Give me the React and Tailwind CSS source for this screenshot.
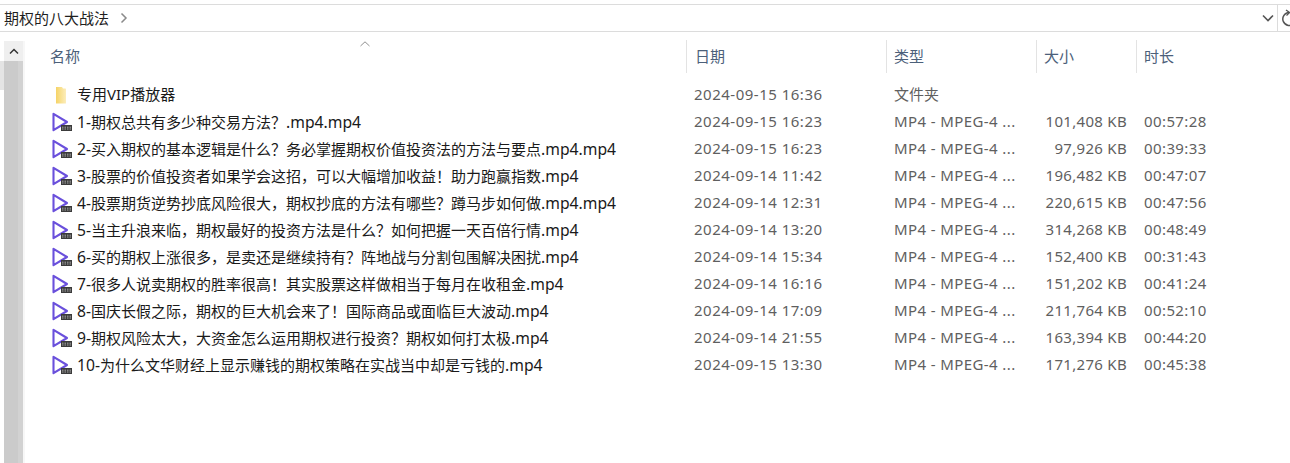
const font = { fontFamily: '"Noto Sans","Noto Sans CJK SC",sans-serif' };
const files = [
  ["1-期权总共有多少种交易方法？.mp4.mp4","2024-09-15 16:23","101,408 KB","00:57:28"],
  ["2-买入期权的基本逻辑是什么？务必掌握期权价值投资法的方法与要点.mp4.mp4","2024-09-15 16:23","97,926 KB","00:39:33"],
  ["3-股票的价值投资者如果学会这招，可以大幅增加收益！助力跑赢指数.mp4","2024-09-14 11:42","196,482 KB","00:47:07"],
  ["4-股票期货逆势抄底风险很大，期权抄底的方法有哪些？蹲马步如何做.mp4.mp4","2024-09-14 12:31","220,615 KB","00:47:56"],
  ["5-当主升浪来临，期权最好的投资方法是什么？如何把握一天百倍行情.mp4","2024-09-14 13:20","314,268 KB","00:48:49"],
  ["6-买的期权上涨很多，是卖还是继续持有？阵地战与分割包围解决困扰.mp4","2024-09-14 15:34","152,400 KB","00:31:43"],
  ["7-很多人说卖期权的胜率很高！其实股票这样做相当于每月在收租金.mp4","2024-09-14 16:16","151,202 KB","00:41:24"],
  ["8-国庆长假之际，期权的巨大机会来了！国际商品或面临巨大波动.mp4","2024-09-14 17:09","211,764 KB","00:52:10"],
  ["9-期权风险太大，大资金怎么运用期权进行投资？期权如何打太极.mp4","2024-09-14 21:55","163,394 KB","00:44:20"],
  ["10-为什么文华财经上显示赚钱的期权策略在实战当中却是亏钱的.mp4","2024-09-15 13:30","171,276 KB","00:45:38"],
];
const cols = "grid grid-cols-[642px_200px_150px_100px_100px]";

function Name({ text }) {
  return (
    <span className="leading-[20px]">
      {text.split(/([\x00-\x7f]+)/).map((part, i) =>
        i % 2 === 1 ? <span key={i} className="text-[15.7px] leading-none">{part}</span> : part
      )}
    </span>
  );
}
function PlayIcon() {
  return (
    <svg width="33" height="20" viewBox="0 0 33 20" className="shrink-0">
      <path d="M9.5 1.8 L23 10 L9.5 18.2 Z" fill="none" stroke="#6a50dc" strokeWidth="2.1" strokeLinejoin="round" />
      <rect x="17" y="13" width="11" height="6" fill="#3b3b3b" />
      <path d="M18 15.2h9M18 17h9" stroke="#c4c4c4" strokeWidth="0.8" strokeDasharray="1.5 1" />
    </svg>
  );
}
function FolderIcon() {
  return (
    <svg width="33" height="20" viewBox="0 0 33 20" className="shrink-0">
      <defs>
        <linearGradient id="folderFill" x1="0" x2="1" y1="0" y2="0">
          <stop offset="0" stopColor="#f6d366" />
          <stop offset="0.45" stopColor="#f8e08e" />
          <stop offset="1" stopColor="#fcedbb" />
        </linearGradient>
      </defs>
      <path d="M12 2 h6 l1 1.5 h2.5 q0.5 0 0.5 0.5 v14 q0 0.5 -0.5 0.5 h-9.5 z" fill="url(#folderFill)" />
    </svg>
  );
}
function Header({ children, tight }) {
  return (
    <div className={"flex items-center h-[33px] border-l border-[#e3e3e3] text-[15px] text-[#4c607a] " + (tight ? "pl-[7px]" : "pl-[8px]")}>
      {children}
    </div>
  );
}

export default function App() {
  return (
    <div className="w-[1290px] h-[463px] bg-white overflow-hidden flex flex-col" style={font}>
      <div className="mt-[4px] h-[28px] shrink-0 border-y border-[#dcdcdc] flex items-center pl-[4px] text-[15px] text-[#1f1f1f]">
        <span>期权的八大战法</span>
        <svg width="8" height="12" viewBox="0 0 8 12" className="ml-[11px]">
          <path d="M1.5 1.5 L6 6 L1.5 10.5" fill="none" stroke="#8a8a8a" strokeWidth="1.5" />
        </svg>
        <div className="ml-auto flex items-center h-full">
          <svg width="12" height="8" viewBox="0 0 12 8" className="mr-[3px]">
            <path d="M1 1.5 L6 6.5 L11 1.5" fill="none" stroke="#555" strokeWidth="1.6" />
          </svg>
          <div className="h-full w-[13px] border-l border-[#dcdcdc] pl-[4px] flex items-center overflow-hidden">
            <svg width="12" height="18" viewBox="0 0 12 18" className="shrink-0">
              <path d="M7 3.5 A6.5 6.5 0 1 0 12 14.5" fill="none" stroke="#555" strokeWidth="1.5" />
              <path d="M4 1 L7.5 3.5 L4.5 6.5" fill="none" stroke="#555" strokeWidth="1.3" />
            </svg>
          </div>
        </div>
      </div>
      <div className="flex flex-1 min-h-0">
        <div className="flex w-[25px] shrink-0 pt-[9px]">
          <div className="w-[4px] pt-[20px]"><div className="h-[29px] bg-[#e4e4e4]" /></div>
          <div className="w-[19px] flex flex-col">
            <div className="h-[20px] shrink-0 bg-[#efefef] flex items-center justify-center">
              <svg width="10" height="7" viewBox="0 0 10 7">
                <path d="M1 5.5 L5 1.5 L9 5.5" fill="none" stroke="#333" strokeWidth="1.5" />
              </svg>
            </div>
            <div className="flex-1 flex">
              <div className="flex-1 bg-[#cbcbcb]" />
              <div className="w-[5px] bg-[#d2d2d2]" />
            </div>
          </div>
          <div className="w-[2px] bg-[#f7f7f7]" />
        </div>
        <div className="flex-1 min-w-0 pl-[19px] pt-[8px] relative">
          <svg width="10" height="6" viewBox="0 0 10 6" className="absolute left-[335px] top-[9px]">
            <path d="M0.5 5 L5 0.8 L9.5 5" fill="none" stroke="#909090" strokeWidth="1" />
          </svg>
          <div className={cols}>
            <div className="flex items-center h-[33px] pl-[6px] text-[15px] text-[#4c607a]">名称</div>
            <Header>日期</Header>
            <Header tight>类型</Header>
            <Header tight>大小</Header>
            <Header tight>时长</Header>
          </div>
          <div className="pt-[8px] text-[15px]">
            <div className={cols + " h-[27px] items-center"}>
              <div className="flex items-center text-[#1a1a1a]"><FolderIcon /><span>专用VIP播放器</span></div>
              <div className="pl-[8px] text-[#5f5f5f] tracking-[0.5px]">2024-09-15 16:36</div>
              <div className="pl-[8px] text-[#5f5f5f]">文件夹</div>
              <div />
              <div />
            </div>
            {files.map((f) => (
              <div key={f[0]} className={cols + " h-[27px] items-center"}>
                <div className="flex items-center text-[#1a1a1a] whitespace-nowrap"><PlayIcon /><Name text={f[0]} /></div>
                <div className="pl-[8px] text-[#5f5f5f] tracking-[0.5px]">{f[1]}</div>
                <div className="pl-[8px] text-[#5f5f5f] whitespace-nowrap tracking-[0.4px]">MP4 - MPEG-4 ...</div>
                <div className="text-right pr-[9px] text-[#5f5f5f] tracking-[0.3px]">{f[2]}</div>
                <div className="pl-[8px] text-[#5f5f5f] tracking-[0.4px]">{f[3]}</div>
              </div>
            ))}
          </div>
        </div>
      </div>
    </div>
  );
}
